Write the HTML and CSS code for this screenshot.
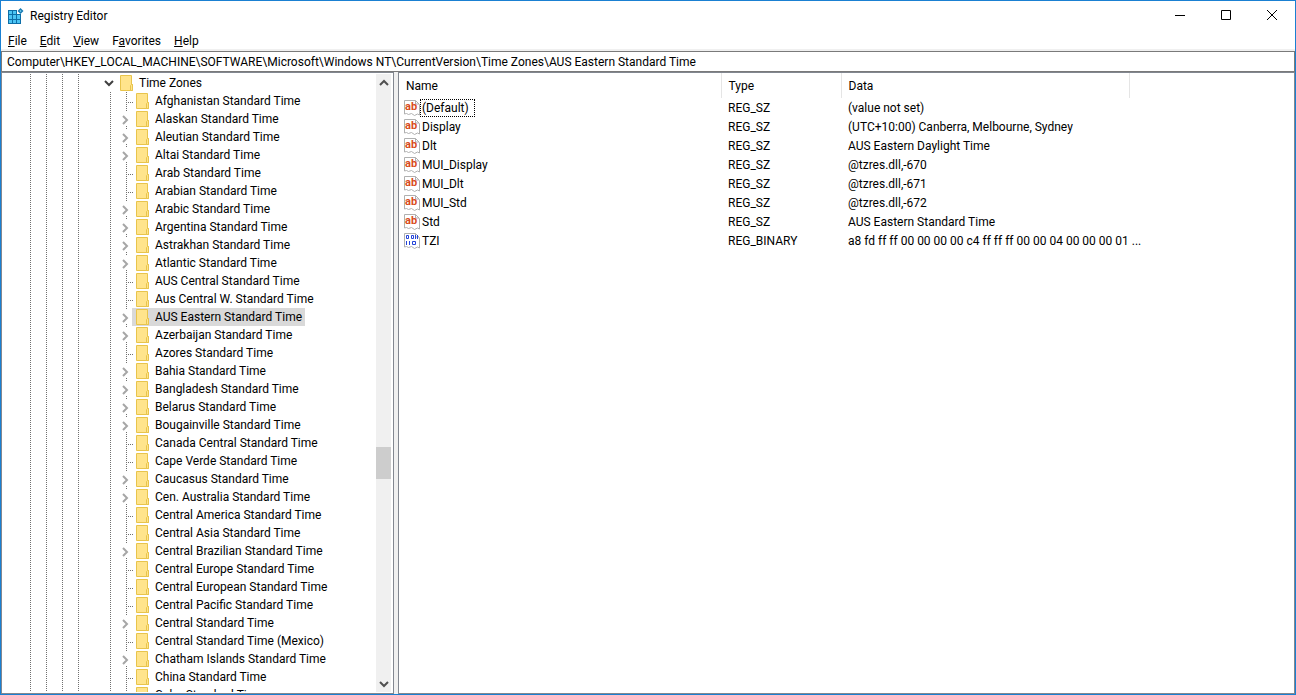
FILE: index.html
```
<!DOCTYPE html>
<html lang="en">
<head>
  <meta charset="UTF-8" />
  <title>Registry Editor</title>
  <link rel="stylesheet" href="styles.css">
</head>
<body>

<svg class="sprites" aria-hidden="true">
  <symbol id="folder" viewBox="0 0 14 16">
    <path d="M0.5 0.5h11v9h1v6h-12z" fill="#ffe48c" stroke="#e8c44c" />
    <path d="M10.5 15.5v-5l1-1h1v6z" fill="#ffe48c" stroke="#e8c44c" />
  </symbol>
  <symbol id="page" viewBox="0 0 16 16">
    <path d="M0.5 0.5h11l4 4v10.5l-2-1-3 1.5-3-2-3 1-2-1-2 0.5z" fill="#fff" stroke="#b0b0b0" />
    <path d="M11.5 0.5v3.5h3.5" fill="none" stroke="#b0b0b0" />
  </symbol>
</svg>

<header class="titlebar">
  <svg class="logo" width="16" height="16" viewBox="0 0 16 16">
    <path d="M0 2h9v4h4v10H0z" fill="#0d6ea8" />
    <path d="M1 3h3v3H1zM5 3h3v3H5zM1 7h3v4H1zM5 7h3v4H5zM9 7h3v4H9zM1 12h3v3H1zM5 12h3v3H5zM9 12h3v3H9z" fill="#4cc4f4" />
    <path d="M12.5 0l3 3-3 3-3-3z" fill="#1a7cb4" />
    <path d="M12.5 2l1 1-1 1-1-1z" fill="#7cd4f4" />
  </svg>
  <h1>Registry Editor</h1>
  <div class="controls">
    <button aria-label="Minimize"><svg width="12" height="12"><path d="M1 6.5h10" /></svg></button>
    <button aria-label="Maximize"><svg width="12" height="12"><path d="M1.5 1.5h9v9h-9z" /></svg></button>
    <button aria-label="Close"><svg width="12" height="12"><path d="M1 1l10 10M11 1L1 11" /></svg></button>
  </div>
</header>

<nav class="menu">
  <button><u>F</u>ile</button>
  <button><u>E</u>dit</button>
  <button><u>V</u>iew</button>
  <button>F<u>a</u>vorites</button>
  <button><u>H</u>elp</button>
</nav>

<input class="address" type="text" aria-label="Address" value="Computer\HKEY_LOCAL_MACHINE\SOFTWARE\Microsoft\Windows NT\CurrentVersion\Time Zones\AUS Eastern Standard Time">

<main class="panes">
  <section class="tree-pane">
    <div class="tree-view">
      <div class="root">
        <svg class="arrow" width="12" height="10"><path d="M1 3l4 4 4-4" /></svg>
        <svg class="icon" width="14" height="16"><use href="#folder" /></svg>
        <span>Time Zones</span>
      </div>
      <ul class="tree" id="tree"></ul>
    </div>
    <div class="scrollbar">
      <button aria-label="Scroll up"><svg width="10" height="8"><path d="M1 6l4-4 4 4" /></svg></button>
      <div class="track"><div class="thumb"></div></div>
      <button aria-label="Scroll down"><svg width="10" height="8"><path d="M1 2l4 4 4-4" /></svg></button>
    </div>
  </section>

  <section class="list-pane">
    <table class="values">
      <colgroup><col class="col-name"><col class="col-type"><col class="col-data"><col></colgroup>
      <thead>
        <tr><th>Name</th><th>Type</th><th>Data</th><td></td></tr>
      </thead>
      <tbody id="values"></tbody>
    </table>
  </section>
</main>

<script>
// a leading "+" marks a key that has subkeys
const keys = [
  "Afghanistan Standard Time", "+Alaskan Standard Time", "+Aleutian Standard Time",
  "+Altai Standard Time", "Arab Standard Time", "Arabian Standard Time",
  "+Arabic Standard Time", "+Argentina Standard Time", "+Astrakhan Standard Time",
  "+Atlantic Standard Time", "AUS Central Standard Time", "Aus Central W. Standard Time",
  "+AUS Eastern Standard Time", "+Azerbaijan Standard Time", "Azores Standard Time",
  "+Bahia Standard Time", "+Bangladesh Standard Time", "+Belarus Standard Time",
  "+Bougainville Standard Time", "Canada Central Standard Time", "Cape Verde Standard Time",
  "+Caucasus Standard Time", "+Cen. Australia Standard Time", "Central America Standard Time",
  "Central Asia Standard Time", "+Central Brazilian Standard Time", "Central Europe Standard Time",
  "Central European Standard Time", "Central Pacific Standard Time", "+Central Standard Time",
  "Central Standard Time (Mexico)", "+Chatham Islands Standard Time", "China Standard Time",
  "Cuba Standard Time"
];

const values = [
  ["(Default)", "REG_SZ", "(value not set)"],
  ["Display", "REG_SZ", "(UTC+10:00) Canberra, Melbourne, Sydney"],
  ["Dlt", "REG_SZ", "AUS Eastern Daylight Time"],
  ["MUI_Display", "REG_SZ", "@tzres.dll,-670"],
  ["MUI_Dlt", "REG_SZ", "@tzres.dll,-671"],
  ["MUI_Std", "REG_SZ", "@tzres.dll,-672"],
  ["Std", "REG_SZ", "AUS Eastern Standard Time"],
  ["TZI", "REG_BINARY", "a8 fd ff ff 00 00 00 00 c4 ff ff ff 00 00 04 00 00 00 01 ..."]
];

const selected = "AUS Eastern Standard Time";

const stringMark = `<text x="1" y="10">ab</text>`;
const binaryMark = `<path class="bits" d="M2.5 2.5h2v3h-2zM7.5 2.5h2v3h-2zM11.5 2v4M13.5 2v4M2.5 8v4M5.500 8v4M8.5 8.5h3v3h-3z" />`;

document.getElementById("tree").innerHTML = keys.map(k => {
  const parent = k.startsWith("+");
  const name = k.replace("+", "");
  const twig = parent
    ? `<svg class="twig" width="12" height="18"><path d="M3 6l4 4-4 4" /></svg>`
    : `<i class="twig leaf"></i>`;
  return `<li>${twig}<span class="key${name === selected ? " selected" : ""}">
    <svg class="icon" width="14" height="16"><use href="#folder" /></svg><span>${name}</span></span></li>`;
}).join("");

document.getElementById("values").innerHTML = values.map(([name, type, data], i) => `
  <tr>
    <td><div class="name"><svg width="16" height="16"><use href="#page" />${type === "REG_BINARY" ? binaryMark : stringMark}</svg><span${i === 0 ? ' class="focused"' : ""}>${name}</span></div></td>
    <td>${type}</td><td>${data}</td><td></td>
  </tr>`).join("");
</script>

</body>
</html>
```
FILE: styles.css
```
* { box-sizing: border-box; }
:root { --dots: repeating-linear-gradient(#707070 0 1px, transparent 1px 2px); }
body { margin: 0; height: 100vh; display: flex; flex-direction: column; overflow: hidden; border: 1px solid #1a80d2; background: #fff; color: #000; font: 12px/18px Roboto, sans-serif; }
button { border: 0; padding: 0; background: none; color: inherit; font: inherit; }
.sprites { position: absolute; width: 0; height: 0; }

.titlebar { display: flex; align-items: center; height: 30px; padding-left: 7px; }
.titlebar h1 { margin: 0 0 0 6px; font-size: 12px; font-weight: normal; }
.controls { display: flex; align-self: flex-start; margin-left: auto; }
.controls button { display: grid; place-items: center; width: 46px; height: 28px; }
.controls path { fill: none; stroke: #000; }

.menu { display: flex; gap: 13px; height: 20px; padding: 1px 7px 0; border-bottom: 2px solid #f0f0f0; }
.address { flex: none; width: 100%; height: 21px; padding: 0 5px; border: 1px solid #7a7a7a; outline: 0; font: inherit; }

.panes { flex: 1; display: flex; gap: 4px; min-height: 0; background: #f0f0f0; }
.tree-pane, .list-pane { border: 1px solid #828790; background: #fff; }
.tree-pane { display: flex; width: 393px; padding: 1px 2px 1px 1px; }
.list-pane { flex: 1; overflow: hidden; }

/* dotted guides of the levels above */
.tree-view { flex: 1; overflow: hidden; padding-left: 101px; background-image: var(--dots), var(--dots), var(--dots), var(--dots); background-size: 1px 100%; background-position: 27px 0, 43px 0, 59px 0, 75px 0; background-repeat: no-repeat; }
.root, .tree li, .key { display: flex; align-items: center; height: 18px; white-space: nowrap; }
.root .icon { margin: 0 5px 0 4px; }
.root .arrow path { fill: none; stroke: #404040; stroke-width: 2; }
.tree { margin: 0; padding: 0 0 0 16px; list-style: none; background: var(--dots) 6px 0 / 1px 100% no-repeat; }
.twig { flex: none; width: 12px; height: 18px; background: var(--dots) 6px 0 / 1px 2px no-repeat, var(--dots) 6px 100% / 1px 2px no-repeat; }
.twig.leaf { width: 14px; margin-right: -2px; background: var(--dots) 6px 0 / 1px 100% no-repeat, repeating-linear-gradient(90deg, #707070 0 1px, transparent 1px 2px) 8px 10px / 6px 1px no-repeat; }
.twig path { fill: none; stroke: #a6a6a6; stroke-width: 2; }
.key { padding: 0 3px 0 4px; }
.key .icon { margin-right: 5px; }
.key.selected { background: #d9d9d9; }
.icon { flex: none; }

.scrollbar { display: flex; flex-direction: column; width: 15px; background: #f0f0f0; }
.scrollbar button { display: grid; place-items: center; height: 17px; }
.scrollbar path { fill: none; stroke: #505050; stroke-width: 2; }
.track { flex: 1; }
.thumb { height: 32px; margin-top: 356px; background: #cdcdcd; }

.values { width: 100%; border-collapse: collapse; table-layout: fixed; }
.col-name { width: 322px; }
.col-type { width: 120px; }
.col-data { width: 288px; }
.values th { height: 25px; padding: 0 7px; border-right: 1px solid #e5e5e5; font-weight: normal; text-align: left; }
.values td { height: 19px; padding: 0 7px; white-space: nowrap; }
.values td:first-child { padding-left: 5px; }
.name { display: flex; align-items: center; }
.name span { padding: 0 6px 0 2px; }
.name .focused { outline: 1px dotted #000; outline-offset: -1px; }
.name text { fill: #d84a20; font: bold 11px Roboto, sans-serif; }
.name .bits { fill: none; stroke: #2444d8; }
```
